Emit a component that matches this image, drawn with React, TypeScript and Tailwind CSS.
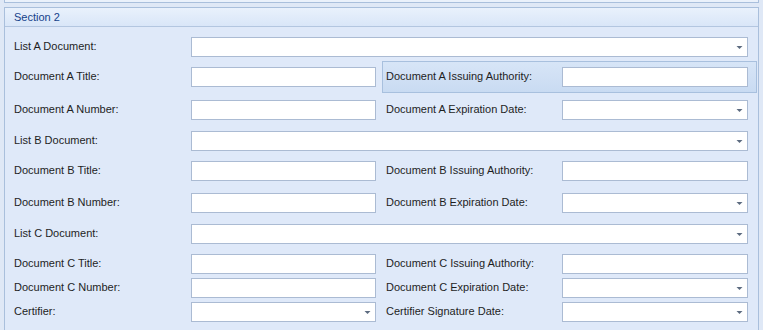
function Arrow() {
  return (
    <svg width="7" height="5" viewBox="0 0 7 5" className="absolute right-[4px] top-1/2 -translate-y-1/2">
      <path d="M0.5 1.5 H6.5 L3.5 4.5 Z" fill="#5d6b80" />
    </svg>
  );
}

function Field({ w, combo }: { w: string; combo?: boolean }) {
  return (
    <div className={`relative h-[20px] shrink-0 bg-white border border-[#abbbd3] ${w}`}>
      {combo && <Arrow />}
    </div>
  );
}

function Label({ text, className = "" }: { text: string; className?: string }) {
  return (
    <div className={`h-[20px] pb-[2px] flex items-center text-[11px] text-[#1e1e1e] ${className}`}>{text}</div>
  );
}

type Row = {
  h: string;
  left: string;
  wide?: boolean;
  combo?: boolean;
  right?: string;
  rightCombo?: boolean;
  active?: boolean;
};

const rows: Row[] = [
  { h: "h-[30px]", left: "List A Document:", wide: true, combo: true },
  { h: "h-[33px]", left: "Document A Title:", right: "Document A Issuing Authority:", active: true },
  { h: "h-[31px]", left: "Document A Number:", right: "Document A Expiration Date:", rightCombo: true },
  { h: "h-[30px]", left: "List B Document:", wide: true, combo: true },
  { h: "h-[32px]", left: "Document B Title:", right: "Document B Issuing Authority:" },
  { h: "h-[31px]", left: "Document B Number:", right: "Document B Expiration Date:", rightCombo: true },
  { h: "h-[30px]", left: "List C Document:", wide: true, combo: true },
  { h: "h-[24px]", left: "Document C Title:", right: "Document C Issuing Authority:" },
  { h: "h-[24px]", left: "Document C Number:", right: "Document C Expiration Date:", rightCombo: true },
  { h: "h-[24px]", left: "Certifier:", combo: true, right: "Certifier Signature Date:", rightCombo: true },
];

export default function App() {
  return (
    <div
      className="w-[763px] h-[330px] overflow-hidden bg-[#dfe8f6] flex flex-col"
      style={{ fontFamily: '"Liberation Sans", Arial, sans-serif' }}
    >
      <div className="h-[3px] shrink-0 ml-[4px] w-[755px] bg-[#eaf1fb] border-b border-l border-r border-[#a9bfdc]" />
      <div className="h-[4px] shrink-0" />
      <div className="ml-[4px] w-[755px] h-[340px] shrink-0 border border-[#a9bfdc] bg-[#dfe9f9] flex flex-col">
        <div className="h-[19px] shrink-0 flex items-center pl-[9px] border-b border-[#b3c6e0] bg-gradient-to-b from-[#e9f1fc] to-[#d9e6f8]">
          <span className="text-[11px] text-[#15428b]">Section 2</span>
        </div>
        <div className="pt-[4px] flex flex-col">
          {rows.map((r) => (
            <div key={r.left} className={`${r.h} shrink-0 flex items-start`}>
              <div className="w-[186px] pl-[9px] mt-[6px] shrink-0">
                <Label text={r.left} />
              </div>
              <div className="mt-[6px] shrink-0">
                <Field w={r.wide ? "w-[557px]" : "w-[185px]"} combo={r.combo} />
              </div>
              {r.right && (
                <>
                  <div className="w-[6px] shrink-0" />
                  {r.active ? (
                    <div className="w-[375px] h-[32px] shrink-0 flex items-center border border-[#a8c0de] bg-gradient-to-b from-[#d7e5f7] to-[#c9dbf2]">
                      <Label text={r.right} className="w-[179px] pl-[3px] shrink-0" />
                      <Field w="w-[186px]" combo={r.rightCombo} />
                    </div>
                  ) : (
                    <div className="w-[375px] mt-[6px] shrink-0 flex items-center">
                      <Label text={r.right} className="w-[180px] pl-[4px] shrink-0" />
                      <Field w="w-[186px]" combo={r.rightCombo} />
                    </div>
                  )}
                </>
              )}
            </div>
          ))}
        </div>
      </div>
    </div>
  );
}
